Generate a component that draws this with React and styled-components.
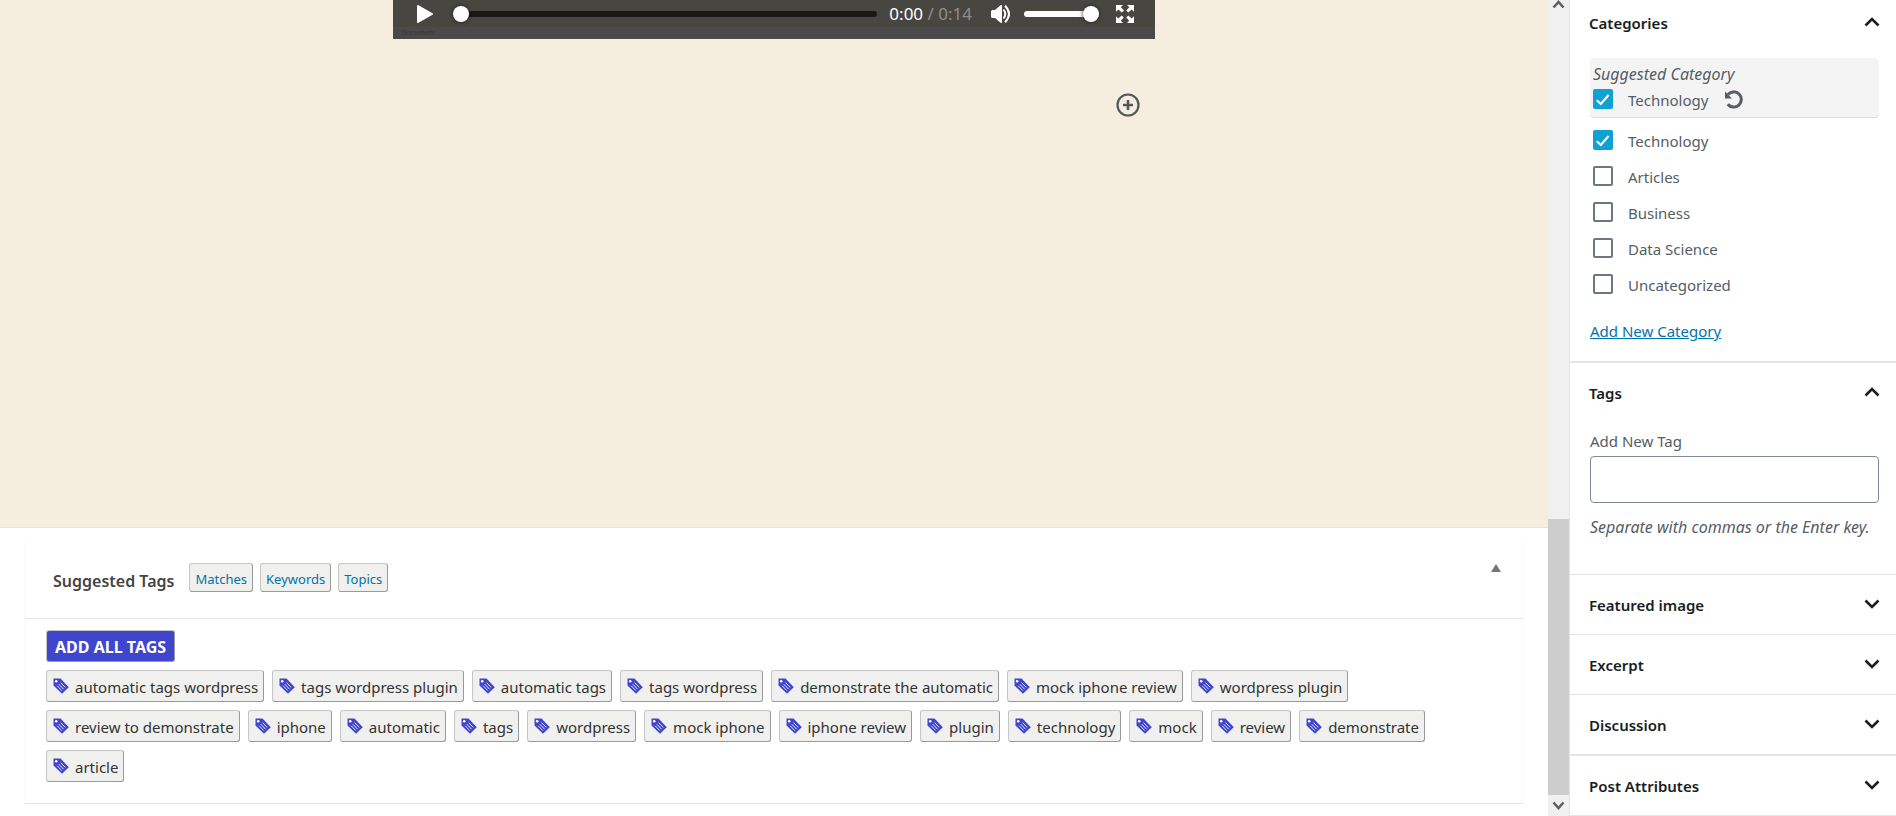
import { useState } from 'react'
import styled, { createGlobalStyle } from 'styled-components'

const suggestedTags = [
  'automatic tags wordpress',
  'tags wordpress plugin',
  'automatic tags',
  'tags wordpress',
  'demonstrate the automatic',
  'mock iphone review',
  'wordpress plugin',
  'review to demonstrate',
  'iphone',
  'automatic',
  'tags',
  'wordpress',
  'mock iphone',
  'iphone review',
  'plugin',
  'technology',
  'mock',
  'review',
  'demonstrate',
  'article',
]

const categories = [
  { id: 1, name: 'Technology', selected: true },
  { id: 2, name: 'Articles', selected: false },
  { id: 3, name: 'Business', selected: false },
  { id: 4, name: 'Data Science', selected: false },
  { id: 5, name: 'Uncategorized', selected: false },
]

const closedPanels = ['Featured image', 'Excerpt', 'Discussion', 'Post Attributes']

const Chevron = ({ up }) => (
  <svg width='16' height='10' viewBox='0 0 16 10' fill='none' aria-hidden='true'>
    <path d={up ? 'M1.5 8.5L8 2l6.5 6.5' : 'M1.5 1.5L8 8l6.5-6.5'} stroke='currentColor' strokeWidth='2.6' />
  </svg>
)

const TagIcon = () => (
  <svg width='16' height='16' viewBox='0 0 16 16' aria-hidden='true'>
    <path d='M0.5 0.5H7.5L15.8 9.2L9 15.8L0.5 7.6Z' fill='#3f46cd' />
    <circle cx='3.2' cy='3.2' r='1.3' fill='#fff' />
    <path d='M7.6 4.6l4.6 4.8M5.8 6.2l4.8 5M4.2 7.8l4.6 4.8' stroke='#f0f0ee' strokeWidth='0.9' />
  </svg>
)

const Check = ({ id, name, selected }) => {
  const [checked, setChecked] = useState(selected)
  return (
    <CheckLabel htmlFor={id}>
      <CheckCell>
        <CheckInput id={id} type='checkbox' checked={checked} onChange={() => setChecked(!checked)} />
        {checked && (
          <svg width='20' height='20' viewBox='0 0 20 20' fill='none' aria-hidden='true'>
            <path d='M3.8 11.2l4 3.8L15.6 6' stroke='#fff' strokeWidth='2' />
          </svg>
        )}
      </CheckCell>
      <span>{name}</span>
    </CheckLabel>
  )
}

const Player = () => (
  <PlayerBox>
    <Controls>
      <ControlButton aria-label='Play'>
        <svg width='18' height='20' viewBox='0 0 18 20' aria-hidden='true'>
          <path d='M2 2L16 10L2 18Z' fill='#fff' stroke='#fff' strokeWidth='2' strokeLinejoin='round' />
        </svg>
      </ControlButton>
      <Seek type='range' min='0' max='14' defaultValue='0' aria-label='Seek' />
      <Time>
        0:00 <span>/ 0:14</span>
      </Time>
      <ControlButton aria-label='Mute'>
        <svg width='22' height='20' viewBox='0 0 22 20' aria-hidden='true'>
          <path d='M1 7.5Q1 6 2.5 6H5L10.500 1.200Q12 .4 12 2V18Q12 19.600 10.500 18.800L5 14H2.500Q1 14 1 12.500Z' fill='#fff' />
          <path d='M13.500 5.500Q17 10 13.500 14.500M15 1.800Q23 10 15 18.200' fill='none' stroke='#fff' strokeWidth='2' />
        </svg>
      </ControlButton>
      <Volume type='range' min='0' max='100' defaultValue='100' aria-label='Volume' />
      <ControlButton aria-label='Full screen'>
        <svg width='20' height='20' viewBox='0 0 20 20' aria-hidden='true'>
          <path
            d='M1 1h7L5.800 3.200L9 6.400L6.800 8.600L3.400 5.400L1 7.800ZM19 1v6.800L16.600 5.400L13.400 8.600L11.200 6.400L14.400 3.200L12 1ZM1 19v-6.800L3.400 14.600L6.600 11.400L8.800 13.600L5.800 16.800L8 19ZM19 19h-7L14.200 16.800L11.200 13.600L13.400 11.400L16.600 14.600L19 12.200Z'
            fill='#fff'
          />
        </svg>
      </ControlButton>
    </Controls>
    <Strip>Document</Strip>
  </PlayerBox>
)

const App = () => {
  const [newTag, setNewTag] = useState('')

  return (
    <Page>
      <GlobalStyle />
      <Editor>
        <Canvas>
          <Block>
            <Player />
            <Inserter aria-label='Add block'>
              <svg width='24' height='24' viewBox='0 0 24 24' fill='none' aria-hidden='true'>
                <circle cx='12' cy='12' r='10.500' stroke='#50575e' strokeWidth='2.200' />
                <path d='M12 7v10M7 12h10' stroke='#50575e' strokeWidth='2.600' />
              </svg>
            </Inserter>
          </Block>
        </Canvas>
        <MetaArea>
          <MetaBox>
            <MetaHeader>
              <MetaTitle>Suggested Tags</MetaTitle>
              <Sources>
                <SourceButton>Matches</SourceButton>
                <SourceButton>Keywords</SourceButton>
                <SourceButton>Topics</SourceButton>
              </Sources>
              <Toggle aria-label='Toggle panel'>
                <svg width='10' height='8' viewBox='0 0 10 8' aria-hidden='true'>
                  <path d='M5 0L10 8H0Z' fill='#72777c' />
                </svg>
              </Toggle>
            </MetaHeader>
            <MetaBody>
              <AddAll>ADD ALL TAGS</AddAll>
              <TagList>
                {suggestedTags.map((tag) => (
                  <TagButton key={tag}>
                    <TagIcon />
                    {tag}
                  </TagButton>
                ))}
              </TagList>
            </MetaBody>
          </MetaBox>
        </MetaArea>
      </Editor>

      <Scrollbar aria-hidden='true'>
        <Track>
          <svg width='13' height='9' viewBox='0 0 13 9' fill='none'>
            <path d='M1.500 7.500L6.500 2l5 5.500' stroke='#606060' strokeWidth='2.600' />
          </svg>
        </Track>
        <Thumb />
        <ArrowEnd>
          <svg width='13' height='9' viewBox='0 0 13 9' fill='none'>
            <path d='M1.500 1.500L6.500 7l5-5.500' stroke='#606060' strokeWidth='2.600' />
          </svg>
        </ArrowEnd>
      </Scrollbar>

      <Sidebar>
        <Panel $thick>
          <PanelToggle $first>
            Categories
            <Chevron up />
          </PanelToggle>
          <PanelBody>
            <Suggested>
              <Hint>Suggested Category</Hint>
              <SuggestedRow>
                <Check id='suggested' name='Technology' selected />
                <RefreshButton aria-label='Refresh suggestion'>
                  <svg width='20' height='20' viewBox='0 0 20 20' fill='none' aria-hidden='true'>
                    <path d='M4 5.500A7.600 7.600 0 1 1 3.800 15.200' stroke='#555d66' strokeWidth='3' />
                    <path d='M1 2.500V9.500H8Z' fill='#555d66' />
                  </svg>
                </RefreshButton>
              </SuggestedRow>
            </Suggested>
            <CategoryList>
              {categories.map(({ id, name, selected }) => (
                <Check key={id} id={`category-${id}`} name={name} selected={selected} />
              ))}
            </CategoryList>
            <AddLink href='#new-category'>Add New Category</AddLink>
          </PanelBody>
        </Panel>
        <Panel>
          <PanelToggle>
            Tags
            <Chevron up />
          </PanelToggle>
          <TagForm>
            <label htmlFor='new-tag'>Add New Tag</label>
            <TagInput id='new-tag' type='text' value={newTag} onChange={(e) => setNewTag(e.target.value)} />
            <Hint>Separate with commas or the Enter key.</Hint>
          </TagForm>
        </Panel>
        {closedPanels.map((title) => (
          <Panel key={title} $thick={title === 'Discussion'}>
            <PanelToggle>
              {title}
              <Chevron />
            </PanelToggle>
          </Panel>
        ))}
      </Sidebar>
    </Page>
  )
}

const GlobalStyle = createGlobalStyle`
  * {
    box-sizing: border-box;
  }
  body {
    margin: 0;
    background: #fff;
    color: #555d66;
    font: 15px/20px 'Noto Sans', 'Open Sans', sans-serif;
  }
  button,
  input {
    margin: 0;
    font: inherit;
  }
  svg {
    display: block;
    flex: none;
  }
`

const Page = styled.div`
  display: flex;
  height: 100vh;
  overflow: hidden;
`

const Editor = styled.main`
  display: flex;
  flex: 1;
  flex-direction: column;
  min-width: 0;
`

const Canvas = styled.section`
  flex: 1;
  background: #f5eede;
  border-bottom: 1px solid #e2e4e7;
`

const Block = styled.div`
  display: flex;
  flex-direction: column;
  align-items: flex-end;
  max-width: 762px;
  margin: 0 auto;
`

const PlayerBox = styled.div`
  width: 100%;
  background: #474641;
`

const Controls = styled.div`
  display: flex;
  align-items: center;
  height: 27px;
  padding: 0 20px 0 23px;
`

const ControlButton = styled.button`
  padding: 0;
  background: none;
  border: 0;
`

const Range = styled.input`
  appearance: none;
  height: 6px;
  border-radius: 3px;
  &::-webkit-slider-thumb {
    appearance: none;
    width: 16px;
    height: 16px;
    background: #fff;
    border-radius: 50%;
    box-shadow: 0 0 4px #222;
  }
`

const Seek = styled(Range)`
  flex: 1;
  min-width: 0;
  margin: 0 12px 0 19px;
  background: #171814;
`

const Volume = styled(Range)`
  width: 75px;
  margin: 0 16px 0 12px;
  background: #fff;
`

const Time = styled.span`
  margin-right: 18px;
  color: #fff;
  font-size: 17px;
  span {
    color: #8e8e8b;
  }
`

const Strip = styled.div`
  height: 12px;
  padding-left: 8px;
  background: #4a4a4a;
  color: #383838;
  font-size: 7px;
  line-height: 12px;
`

const Inserter = styled.button`
  margin: 54px 15px 0 0;
  padding: 0;
  background: none;
  border: 0;
`

const MetaArea = styled.section`
  padding: 14px 24px 12px;
`

const MetaBox = styled.div`
  border: 1px solid #f8f8f8;
  border-top: 0;
  border-bottom-color: #e2e4e7;
`

const MetaHeader = styled.header`
  display: flex;
  align-items: center;
  height: 77px;
  padding: 0 22px 0 28px;
  border-bottom: 1px solid #e2e4e7;
`

const MetaTitle = styled.h2`
  margin: 0;
  padding-top: 2px;
  color: #444;
  font-size: 16px;
  font-weight: 600;
`

const Sources = styled.div`
  display: flex;
  flex: 1;
  gap: 7px;
  margin: 0 15px;
  padding-bottom: 5px;
`

const Chip = styled.button`
  padding: 0 6px;
  background: #f0f0ee;
  border: 1px solid;
  border-color: #c6c6c6 #999 #999 #c6c6c6;
  border-radius: 3px;
  color: #333;
`

const SourceButton = styled(Chip)`
  height: 29px;
  padding: 2px 5px 0;
  color: #0073aa;
  font-size: 13px;
`

const Toggle = styled.button`
  margin-bottom: 24px;
  padding: 0;
  background: none;
  border: 0;
`

const MetaBody = styled.div`
  padding: 11px 21px 21px;
`

const AddAll = styled(Chip)`
  display: block;
  height: 32px;
  padding: 2px 8px 0;
  background: #3f46cd;
  color: #fff;
  font-size: 16px;
  font-weight: 700;
`

const TagList = styled.div`
  display: flex;
  flex-wrap: wrap;
  gap: 8px;
  margin-top: 8px;
`

const TagButton = styled(Chip)`
  display: flex;
  align-items: center;
  gap: 6px;
  height: 32px;
  padding: 2px 5px 0 6px;
  svg {
    margin-bottom: 2px;
  }
`

const Scrollbar = styled.div`
  display: flex;
  flex: none;
  flex-direction: column;
  width: 21px;
  background: #f0f0f0;
`

const Track = styled.div`
  flex: 519;
  padding-left: 4px;
`

const Thumb = styled.div`
  flex: 276;
  background: #cdcdcd;
`

const ArrowEnd = styled.div`
  height: 21px;
  padding: 6px 0 0 4px;
`

const Sidebar = styled.aside`
  flex: none;
  width: 327px;
  border-left: 1px solid #e2e4e7;
`

const Panel = styled.section`
  border-bottom: ${({ $thick }) => ($thick ? '2px' : '1px')} solid #e2e4e7;
`

const PanelToggle = styled.button`
  display: flex;
  align-items: center;
  justify-content: space-between;
  width: 100%;
  height: ${({ $first }) => ($first ? '46px' : '59px')};
  padding: 0 16px 0 19px;
  background: none;
  border: 0;
  color: #191e23;
  font-weight: 600;
  svg {
    margin-bottom: 2px;
  }
`

const PanelBody = styled.div`
  padding: 12px 17px 20px 20px;
`

const Hint = styled.em`
  font-size: 16px;
`

const Suggested = styled.div`
  height: 60px;
  padding: 6px 3px 0;
  background: #f4f4f4;
  border-bottom: 1px solid #ddd;
  border-radius: 4px;
`

const SuggestedRow = styled.div`
  display: flex;
  gap: 16px;
  margin-top: 5px;
`

const CheckLabel = styled.label`
  display: flex;
  align-items: center;
  gap: 15px;
  height: 20px;
  span {
    padding-top: 1px;
  }
`

const CheckCell = styled.div`
  display: grid;
  > * {
    grid-area: 1 / 1;
  }
  svg {
    pointer-events: none;
  }
`

const CheckInput = styled.input`
  appearance: none;
  width: 20px;
  height: 20px;
  border: 2px solid #6c7781;
  border-radius: 2px;
  &:checked {
    background: #11a0d2;
    border-color: #11a0d2;
  }
`

const RefreshButton = styled.button`
  padding: 0;
  background: none;
  border: 0;
`

const CategoryList = styled.div`
  display: grid;
  gap: 16px;
  padding: 12px 3px 0;
`

const AddLink = styled.a`
  display: inline-block;
  margin-top: 27px;
  color: #0073aa;
`

const TagForm = styled.div`
  display: flex;
  flex-direction: column;
  padding: 9px 17px 37px 20px;
`

const TagInput = styled.input`
  height: 47px;
  margin: 5px 0 14px;
  padding: 0 8px;
  border: 1px solid #7e8993;
  border-radius: 4px;
`

export default App
